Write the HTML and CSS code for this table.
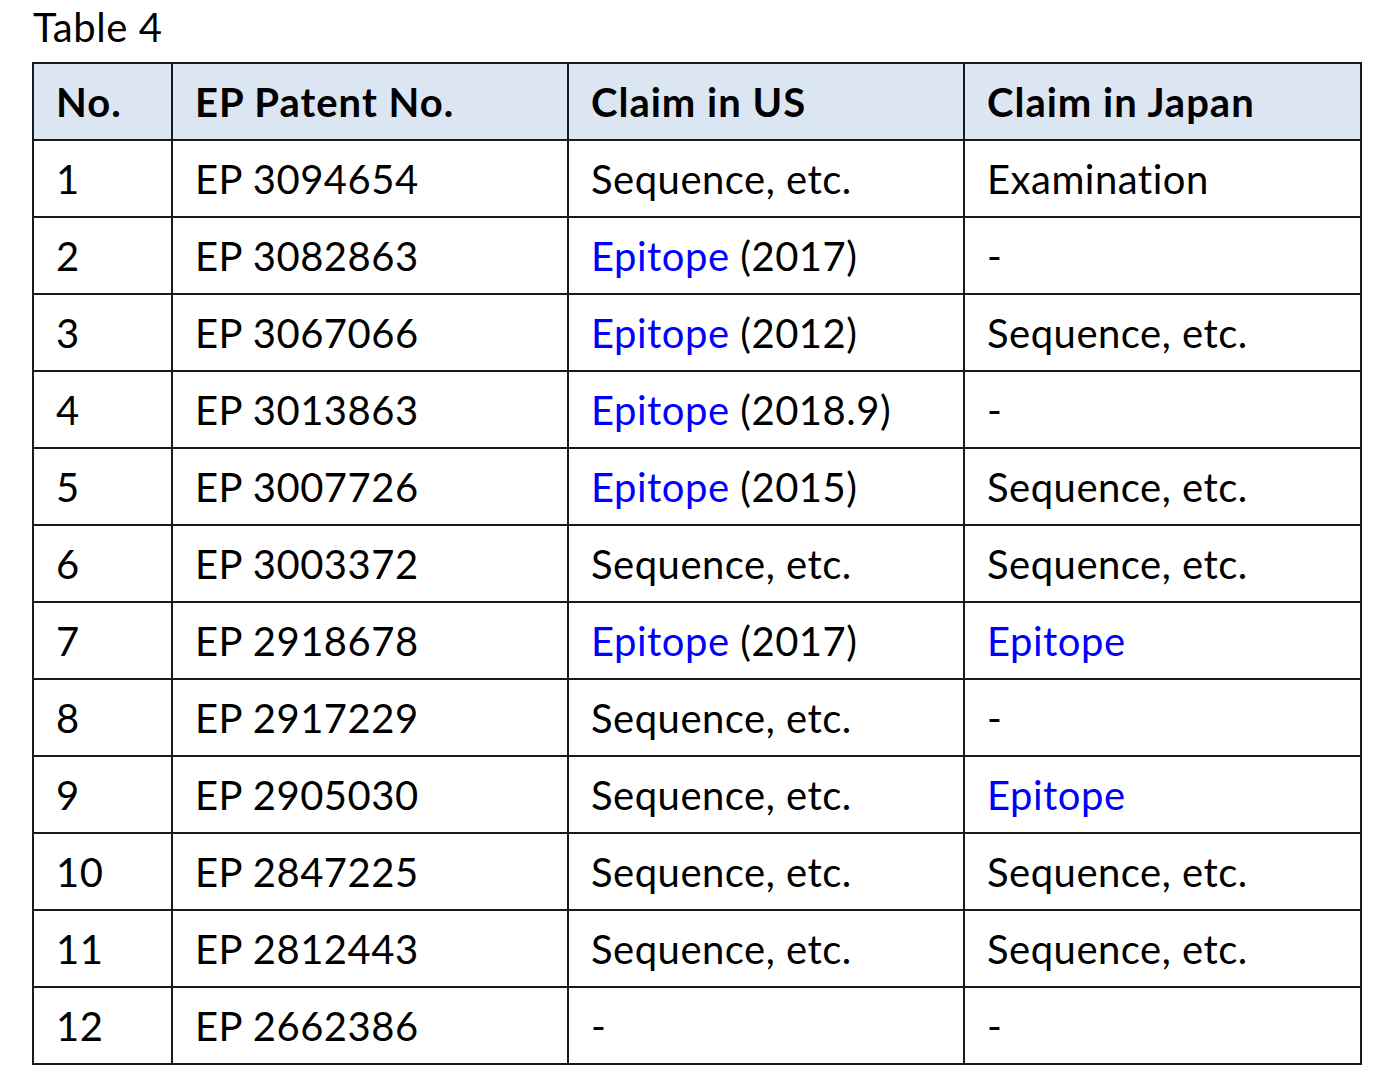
FILE: index.html
```html
<!DOCTYPE html>
<html>
<head>
<meta charset="utf-8">
<link rel="stylesheet" href="styles.css">
</head>
<body>
<div class="page">
  <div class="caption">Table 4</div>
  <table class="patents">
    <colgroup>
      <col class="c-no"><col class="c-ep"><col class="c-us"><col class="c-jp">
    </colgroup>
    <thead>
      <tr><th>No.</th><th>EP Patent No.</th><th>Claim in US</th><th>Claim in Japan</th></tr>
    </thead>
    <tbody>
      <tr><td>1</td><td>EP 3094654</td><td>Sequence, etc.</td><td>Examination</td></tr>
      <tr><td>2</td><td>EP 3082863</td><td><span class="blue">Epitope</span> (2017)</td><td>-</td></tr>
      <tr><td>3</td><td>EP 3067066</td><td><span class="blue">Epitope</span> (2012)</td><td>Sequence, etc.</td></tr>
      <tr><td>4</td><td>EP 3013863</td><td><span class="blue">Epitope</span> (2018.9)</td><td>-</td></tr>
      <tr><td>5</td><td>EP 3007726</td><td><span class="blue">Epitope</span> (2015)</td><td>Sequence, etc.</td></tr>
      <tr><td>6</td><td>EP 3003372</td><td>Sequence, etc.</td><td>Sequence, etc.</td></tr>
      <tr><td>7</td><td>EP 2918678</td><td><span class="blue">Epitope</span> (2017)</td><td><span class="blue">Epitope</span></td></tr>
      <tr><td>8</td><td>EP 2917229</td><td>Sequence, etc.</td><td>-</td></tr>
      <tr><td>9</td><td>EP 2905030</td><td>Sequence, etc.</td><td><span class="blue">Epitope</span></td></tr>
      <tr><td>10</td><td>EP 2847225</td><td>Sequence, etc.</td><td>Sequence, etc.</td></tr>
      <tr><td>11</td><td>EP 2812443</td><td>Sequence, etc.</td><td>Sequence, etc.</td></tr>
      <tr><td>12</td><td>EP 2662386</td><td>-</td><td>-</td></tr>
    </tbody>
  </table>
</div>
</body>
</html>
```

FILE: styles.css
```css
html, body {
  margin: 0;
  padding: 0;
  background: #ffffff;
}
.page {
  padding: 4px 0 0 32px;
  font-family: Lato, "Open Sans", sans-serif;
  color: #000;
}
.caption {
  font-size: 40px;
  line-height: 46px;
  height: 58px;
  padding-left: 1px;
  letter-spacing: 0.6px;
}
.patents {
  border-collapse: collapse;
  table-layout: fixed;
  width: 1328px;
  font-size: 40px;
  letter-spacing: 0.5px;
}
.c-no { width: 139px; }
.c-ep { width: 396px; }
.c-us { width: 396px; }
.c-jp { width: 397px; }
.patents th,
.patents td {
  border: 2px solid #1a1a1a;
  padding: 0 0 0 22px;
  text-align: left;
  vertical-align: middle;
  white-space: nowrap;
}
.patents th {
  height: 75px;
  background: #dce6f2;
  font-weight: 700;
  letter-spacing: 1px;
}
.patents td {
  height: 75px;
}
.blue {
  color: #0000ff;
}
```
